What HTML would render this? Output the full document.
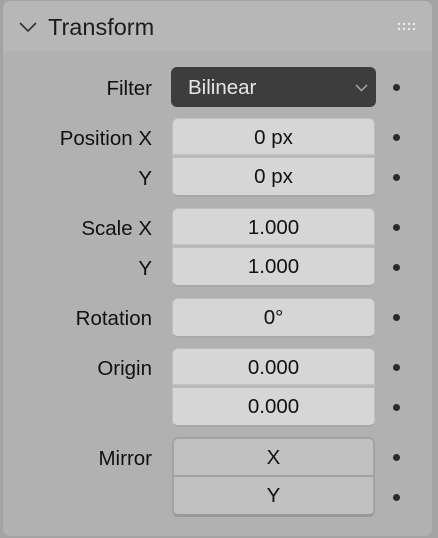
<!DOCTYPE html><html><head><style>
body{margin:0;width:438px;height:538px;background:#a3a3a3;font-family:"Liberation Sans",sans-serif;position:relative;overflow:hidden}
.panel{position:absolute;left:3px;top:1px;width:429px;height:535px;background:#b1b1b1;border-radius:7px;overflow:hidden}
.hdr{position:absolute;left:0;top:0;width:100%;height:50px;background:#b7b7b7}
.ttl{position:absolute;left:45px;top:14px;font-size:23.5px;color:#1c1c1c}
.lab{position:absolute;right:286px;font-size:20.5px;color:#111;line-height:20px}
.f{position:absolute;left:172px;width:203px;height:38px;background:#d6d6d6;border:1px solid #bfbfbf;box-sizing:border-box;text-align:center;font-size:20.5px;line-height:38px;color:#111}
.top{border-radius:6px 6px 0 0;border-bottom:2px solid #c0c0c0}
.bot{border-radius:0 0 6px 6px;border-bottom:2px solid #a8a8a8}
.one{border-radius:6px;border-bottom:2px solid #a8a8a8}
.m{background:#c1c1c1;border:2px solid #a3a3a3}
.dot{position:absolute;left:393px;width:7px;height:7px;border-radius:50%;background:#2a2a2a}
</style></head><body>
<div class="panel"><div class="hdr"></div></div>
<svg style="position:absolute;left:18px;top:21px" width="20" height="12"><path d="M2 2 L10 10 L18 2" stroke="#333" stroke-width="1.6" fill="none"/></svg>
<div class="ttl" style="left:48px">Transform</div>
<svg style="position:absolute;left:397px;top:22px" width="22" height="10" fill="#f0f0f0"><rect x="1" y="1" width="2" height="2"/><rect x="6" y="1" width="2" height="2"/><rect x="11" y="1" width="2" height="2"/><rect x="16" y="1" width="2" height="2"/><rect x="1" y="6" width="2" height="2"/><rect x="6" y="6" width="2" height="2"/><rect x="11" y="6" width="2" height="2"/><rect x="16" y="6" width="2" height="2"/></svg>
<div class="lab" style="top:79px">Filter</div>
<div style="position:absolute;left:171px;top:67px;width:205px;height:40px;background:#3d3d3d;border-radius:6px;color:#e6e6e6;font-size:20.5px;line-height:41px;padding-left:17px;box-sizing:border-box">Bilinear</div>
<svg style="position:absolute;left:355px;top:84px" width="14" height="9"><path d="M1 1 L6.5 6.5 L12 1" stroke="#aaa" stroke-width="1.5" fill="none"/></svg>
<div class="dot" style="top:84px"></div>
<div class="lab" style="top:129px">Position X</div><div class="f top" style="top:118px">0 px</div><div class="dot" style="top:134px"></div>
<div class="lab" style="top:169px">Y</div><div class="f bot" style="top:157px;height:40px">0 px</div><div class="dot" style="top:174px"></div>
<div class="lab" style="top:219px">Scale X</div><div class="f top" style="top:208px">1.000</div><div class="dot" style="top:224px"></div>
<div class="lab" style="top:259px">Y</div><div class="f bot" style="top:247px;height:40px">1.000</div><div class="dot" style="top:264px"></div>
<div class="lab" style="top:309px">Rotation</div><div class="f one" style="top:298px;height:40px">0°</div><div class="dot" style="top:314px"></div>
<div class="lab" style="top:359px">Origin</div><div class="f top" style="top:348px">0.000</div><div class="dot" style="top:364px"></div>
<div class="f bot" style="top:387px;height:40px">0.000</div><div class="dot" style="top:404px"></div>
<div class="lab" style="top:449px">Mirror</div><div class="f m top" style="top:437px;height:40px;border-bottom:2px solid #a3a3a3">X</div><div class="dot" style="top:454px"></div>
<div class="f m bot" style="top:477px;height:40px;border-top:none;border-bottom:3px solid #9a9a9a">Y</div><div class="dot" style="top:494px"></div>
</body></html>
